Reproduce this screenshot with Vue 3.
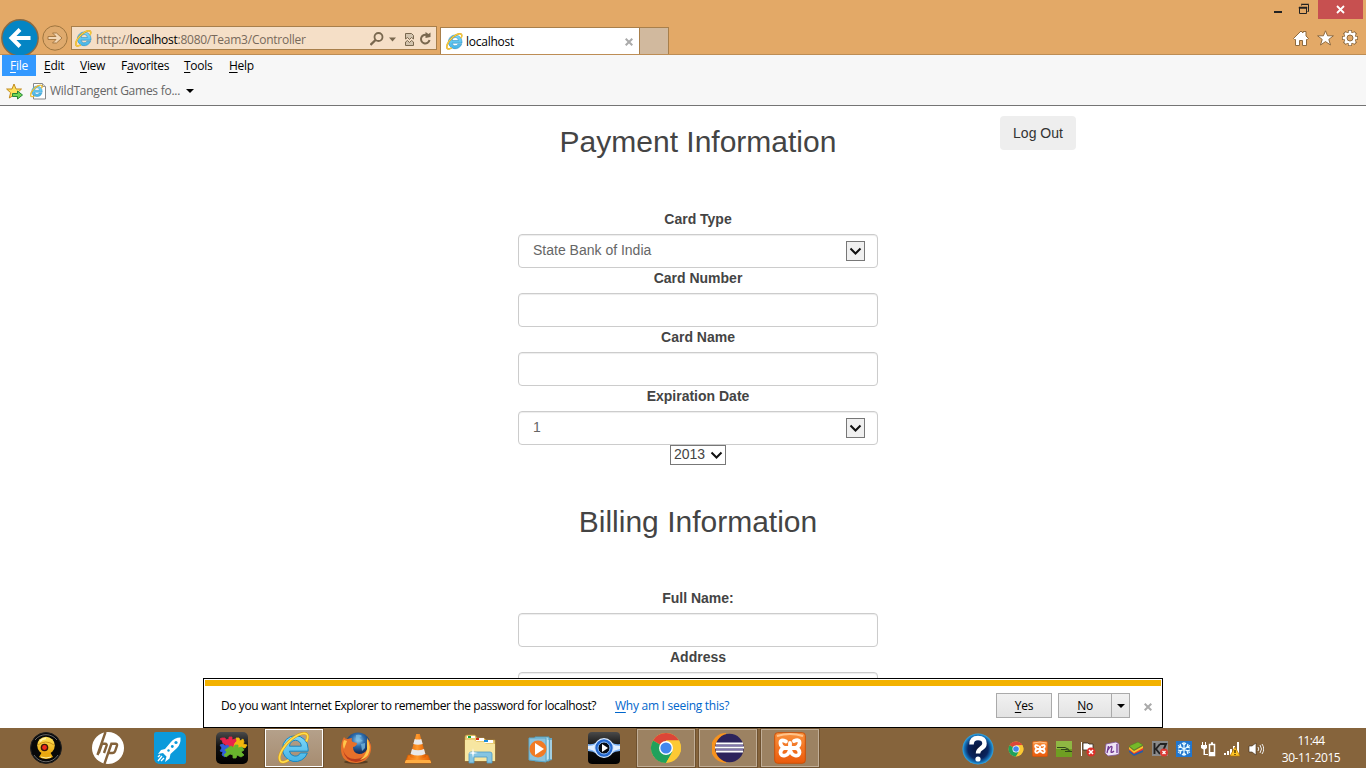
<script setup>
const menus = [
  { key: 'F', rest: 'ile', pre: '', w: 34, active: true },
  { key: 'E', rest: 'dit', pre: '', w: 36 },
  { key: 'V', rest: 'iew', pre: '', w: 41 },
  { key: 'a', rest: 'vorites', pre: 'F', w: 63 },
  { key: 'T', rest: 'ools', pre: '', w: 45 },
  { key: 'H', rest: 'elp', pre: '', w: 42 }
]
const tasks = [
  { id: 'cam' }, { id: 'hp' }, { id: 'rocket' }, { id: 'puzzle' },
  { id: 'ielogo', state: 'active' }, { id: 'firefox' }, { id: 'vlc' }, { id: 'folder' },
  { id: 'media' }, { id: 'eye' }, { id: 'chrome', state: 'open' },
  { id: 'eclipse', state: 'open' }, { id: 'xampp', state: 'open' }
]
const tray = ['chrome', 'xampp', 'nvidia', 'flag', 'onenote', 'stack', 'kasper', 'snow', 'power', 'signal', 'sound']
</script>

<template>
  <div class="screen">
    <svg class="defs" width="0" height="0" aria-hidden="true">
      <defs>
        <linearGradient id="gBlue" x1="0" y1="0" x2="0" y2="1"><stop offset="0" stop-color="#7fd8fa" /><stop offset="1" stop-color="#45b4e6" /></linearGradient>
        <linearGradient id="gBlack" x1="0" y1="0" x2="0" y2="1"><stop offset="0" stop-color="#4a4a4a" /><stop offset=".45" stop-color="#111" /><stop offset="1" stop-color="#000" /></linearGradient>
        <linearGradient id="gOrange" x1="0" y1="0" x2="0" y2="1"><stop offset="0" stop-color="#f9903c" /><stop offset="1" stop-color="#ea5a0b" /></linearGradient>
        <linearGradient id="gVlc" x1="0" y1="0" x2="1" y2="0"><stop offset="0" stop-color="#e86a08" /><stop offset=".45" stop-color="#ff9a2c" /><stop offset="1" stop-color="#e25c00" /></linearGradient>
        <radialGradient id="gHelp"><stop offset="0" stop-color="#071236" /><stop offset=".65" stop-color="#0a2560" /><stop offset=".88" stop-color="#1673b8" /><stop offset="1" stop-color="#35a9e4" /></radialGradient>
        <radialGradient id="gGlobe" cx=".5" cy=".3"><stop offset="0" stop-color="#9bd2ef" /><stop offset=".5" stop-color="#2c6cab" /><stop offset="1" stop-color="#16315f" /></radialGradient>
        <linearGradient id="gYellow" x1="0" y1="0" x2="0" y2="1"><stop offset="0" stop-color="#ffe45c" /><stop offset="1" stop-color="#e9a308" /></linearGradient>
      </defs>
      <symbol id="ielogo" viewBox="0 0 32 32">
        <path d="M4.500 16.500a12.800 12.800 0 0 1 25.600 0v2.700H11.400a5.900 5.900 0 0 0 11 1.800h7A12.800 12.800 0 0 1 4.500 16.500zm7-2.300h11.800a5.900 5.900 0 0 0-11.800 0z" fill="url(#gBlue)" stroke="#1b86bf" stroke-width="1" fill-rule="evenodd" />
        <path d="M28.300 9.500C32 2 28-.5 20.500 2.800 9.500 8-.8 22 2 28.500c1.200 2.700 5 1.800 8.600-.4" fill="none" stroke="#d99a10" stroke-width="2.800" />
        <path d="M28.300 9.500C32 2 28-.5 20.500 2.800 9.500 8-.8 22 2 28.500c1.200 2.700 5 1.800 8.600-.4" fill="none" stroke="#ffdc4d" stroke-width="1.800" />
      </symbol>
      <symbol id="cam" viewBox="0 0 32 32">
        <circle cx="16" cy="16" r="15.500" fill="#080808" stroke="#222" />
        <path d="M5 8a14 14 0 0 1 22 0M4 23a14 14 0 0 0 24 0" fill="none" stroke="#686868" stroke-width="1" />
        <path d="M12 20h8l3 5q-7 4-14 0z" fill="#e8a90f" /><path d="M11 25q5 2 10 0" stroke="#fff1a0" fill="none" />
        <circle cx="16" cy="13.500" r="8.800" fill="url(#gYellow)" /><path d="M8 13q7.500-6 16 0" fill="none" stroke="#c08413" stroke-width=".8" />
        <circle cx="14.500" cy="15.500" r="3.800" fill="#3a1708" /><circle cx="14.500" cy="15.500" r="2.400" fill="#f02a1a" />
        <path d="M10 9.500q2-3 6-3" stroke="#fff5ae" stroke-width="1.500" fill="none" />
      </symbol>
      <symbol id="hp" viewBox="0 0 32 32">
        <circle cx="16" cy="16" r="16" fill="#fff" />
        <path d="M13.500 0 5.500 23M6.800 21 10 11.800h3.200q2 0 1.300 2L12 21M12.400 32 19.400 11.800h4q2.200 0 1.500 2l-1.700 5q-.8 2.200-2.800 2.200h-4" fill="none" stroke="#84623a" stroke-width="2.400" />
      </symbol>
      <symbol id="rocket" viewBox="0 0 32 32">
        <path d="M2 0h25q5 1 5 6v24q0 2-2 2H5q-5-1-5-6V2Q0 0 2 0" fill="#0b9adb" />
        <path d="M26.500 5.500q-6 0-10 5L11 17l-4 1-3 4 5-1 3.500 3.500L11 30l4.500-3.500 1-4.500 6.500-6q4-4 3.500-10.500" fill="#fff" />
        <g fill="#0b9adb"><circle cx="22" cy="10.500" r="1.600" /><circle cx="18.300" cy="14.500" r="1.400" /><circle cx="14.500" cy="18.500" r="1.200" /></g>
        <path d="m6 23-2 2M8 24l-4 5M10 26l-3 3" stroke="#fff" stroke-width="1.400" />
      </symbol>
      <symbol id="puzzle" viewBox="0 0 32 32">
        <rect width="32" height="32" rx="5" fill="url(#gBlack)" />
        <g stroke-width=".8" stroke-linejoin="round">
          <path d="M6 6h3l1 2 3-1V5h3v3l3-1 3 1-2 3 1 4-4-1-1 3-4-1-3 1 1-4-3-2-1-3-2-1z" fill="#e9244c" stroke="#e9244c" />
          <path d="m19 11 2-2-1-3h3l1 3 3-2 1 3-1 2 4 1-2 3-3-1-1 3-4-2-4 1z" fill="#f2b70c" stroke="#f2b70c" />
          <path d="m4 13 3-1 2 2 3-1 1 3-2 2 2 3-3 1-1 3-3-2 1-3-3-1 2-3z" fill="#315ed9" stroke="#315ed9" />
          <path d="m12 16 3-2 3 2 1-3h3v3l4-1 2 3-3 2 3 3-3 2-4-2-1 3h-3v-3l-3-1-4 3-2-2 3-3-2-2z" fill="#68b52d" stroke="#68b52d" />
        </g>
      </symbol>
      <symbol id="firefox" viewBox="0 0 32 32">
        <ellipse cx="16" cy="30" rx="12" ry="1.800" fill="#593e22" />
        <circle cx="18" cy="13" r="12.500" fill="url(#gGlobe)" />
        <path d="M16 3q4-1 6 1l-3 2 4 3-4 1-3-3M21 12l4-1v5l-3 3z" fill="#78bce2" opacity=".75" />
        <path d="M4 5q1 2 3 2l5-1q-1 3 1 4l4 1q0 3-4 4 0 6 6 7 6 0 9-6 1-7-1-10 5 5 4 12-2 12-14 13Q1 31 1 17 1 10 4 5" fill="#e7702a" />
        <path d="M3 18q3 9 12 9 9 0 14-9-3 12-13 12Q5 29 3 18" fill="#b83c1c" />
        <path d="M27 6q5 9 1 17-3 4-8 5 6-5 7-11zM4 8l3 1-3 8q-2-5 0-9" fill="#ffc64b" />
      </symbol>
      <symbol id="vlc" viewBox="0 0 32 32">
        <path d="m6 23-3 8h26l-3-8z" fill="url(#gVlc)" stroke="#cf5d05" stroke-width=".7" />
        <path d="M14.200 2h3.600L24 25q-8 4-16 0z" fill="url(#gVlc)" />
        <path d="m12.700 7-1.400 5q4.700 1.600 9.400 0l-1.400-5q-3.300 1.200-6.600 0M10 17l-1.400 5q7.400 3 14.800 0L22 17q-6 2.400-12 0" fill="#e9e9e9" /><path d="m3 30 1-2h24l1 2v1H3z" fill="#ffad42" />
      </symbol>
      <symbol id="folder" viewBox="0 0 32 32">
        <path d="M1 5q0-2 2-2h8l2 3h7l2 2h9v21H1z" fill="#e9cc74" stroke="#b9943d" stroke-width=".6" />
        <path d="M3 4h8v2H3zm9 2h8v3h-8zm8 2h9v3h-9z" fill="#fff" /><path d="M4 4h3v2H4z" fill="#14a53a" /><path d="M12 6h3v2h-3z" fill="#d5311e" /><path d="M20 8h4v2h-4z" fill="#1b8edb" />
        <path d="M1 8h9l3 2h7l2 2h9v17H1z" fill="#f7e6a1" />
        <path d="M5 31v-9q0-2 2-2h19q2 0 2 2v9h-5v-6H10v6z" fill="#85c5e2" stroke="#4d99c5" stroke-width=".8" /><path d="m9 16 .8 4.200 4.200.8-4.200.8L9 26l-.8-4.200L4 21l4.200-.8z" fill="#fff" />
      </symbol>
      <symbol id="media" viewBox="0 0 32 32">
        <path d="M12 6h14v22l-4 1H12z" fill="#65a9c9" /><path d="M9 5h14v24H9z" fill="#a9d8e8" stroke="#4f9dbf" /><path d="M3 6h17v24L3 28z" fill="#8dc3dc" stroke="#5ba7c8" /><path d="M22 8v19M25 8v19" stroke="#e0f3fa" />
        <circle cx="12" cy="17" r="8.500" fill="#f17b25" /><path d="m9 11 9 6-9 6z" fill="#fff" />
      </symbol>
      <symbol id="eye" viewBox="0 0 32 32">
        <rect width="32" height="32" rx="4" fill="url(#gBlack)" /><path d="M0 12q5 1 9-2 7-5 14 0 4 3 9 2v7q-5 0-9 3-7 5-14 0-4-3-9-3z" fill="#7fb4f5" />
        <path d="M0 14q5 0 8-2v8q-3-2-8-3zM32 14q-5 0-8-2v8q3-2 8-3z" fill="#e2efff" />
        <circle cx="16" cy="16" r="9.300" fill="#2468cf" stroke="#d9eaff" stroke-width="1.200" /><circle cx="16" cy="16" r="6" fill="#060b14" stroke="#8dbdf8" /><path d="m14 12 6 4-6 4z" fill="#fff" />
      </symbol>
      <symbol id="chrome" viewBox="0 0 32 32">
        <circle cx="16" cy="16" r="15" fill="#fcc934" /><path d="M16 16 3 8.500A15 15 0 0 1 29 8.500H16z" fill="#dc4638" /><path d="M16 16 3 8.500a15 15 0 0 0 13 22.500l6.500-11.200z" fill="#20a15c" /><path d="M16 8.500H29Q32 14 30.500 20L16 31l6.500-11.200z" fill="#fcc934" />
        <circle cx="16" cy="16" r="7" fill="#fff" /><circle cx="16" cy="16" r="5.600" fill="#4387ed" />
      </symbol>
      <symbol id="eclipse" viewBox="0 0 32 32">
        <path d="M14 1a15 15 0 1 0 0 30" fill="#f7931e" /><circle cx="17.500" cy="16" r="14.300" fill="#2d245c" />
        <path d="M4 11.500h27M3 15.500h29M4 19.500h27" stroke="#fff" stroke-width="2" /><path d="M4 13.500h27M4 17.500h27" stroke="#8375ae" stroke-width="1" />
      </symbol>
      <symbol id="xampp" viewBox="0 0 32 32">
        <rect x=".7" y=".7" width="30.600" height="30.600" rx="3" fill="url(#gOrange)" stroke="#c95009" /><path d="M3 4q13-4 26 0" stroke="#ffc48c" stroke-width="2" fill="none" />
        <path d="M12 9.500Q6 6.500 6.500 11.500q.3 3 4 4.500h11q3.700-1.500 4-4.500Q26 6.500 20 9M16 11v6M10.500 16Q6.500 17 6.500 20.500 7 24.500 11 23.500q4-1 5-6.500 1 5.500 5 6.500 4 1 4.500-3 0-3.500-4-4.500" fill="none" stroke="#fff" stroke-width="3.800" stroke-linejoin="round" stroke-linecap="round" />
      </symbol>
      <symbol id="nvidia" viewBox="0 0 16 16"><path d="M0 0h16v16H0z" fill="#6f9f22" /><path d="M0 0h16v8H0z" fill="#8fb843" /><path d="M1 6.500h8l4 2M5 8.500h6l4 2M9 10.500h7" stroke="#31471a" fill="none" /></symbol>
      <symbol id="flag" viewBox="0 0 16 16"><path d="M1 1h1v14H1z" fill="#fff" /><path d="M3 2h5l1 1h4v8H9L7 9H3z" fill="#fff" stroke="#33291f" stroke-width=".8" /><circle cx="11" cy="11" r="4.500" fill="#db3028" /><path d="m9 9 4 4m0-4-4 4" stroke="#fff" stroke-width="1.500" /></symbol>
      <symbol id="onenote" viewBox="0 0 16 16"><path d="M2 3 12 1l3 2v10l-3 1-8 1-3-3z" fill="#eee4f5" stroke="#815799" stroke-width=".8" /><path d="m4.500 5-1.500 7M4 9q3-5 4-3l-1 5q1 1 3-1M13 3v9" fill="none" stroke="#713892" stroke-width="1.300" /></symbol>
      <symbol id="stack" viewBox="0 0 16 16"><path d="m1 9 5 4 9-5v3l-9 4-5-4z" fill="#245da9" /><path d="m1 7 5 4 9-5v3l-9 4-5-4z" fill="#ed392f" /><path d="m1 6 5 4 9-5v2l-9 5-5-4z" fill="#f5c829" /><path d="m1 5 9-4 5 3-9 5z" fill="#76b82a" stroke="#47831e" stroke-width=".5" /></symbol>
      <symbol id="kasper" viewBox="0 0 16 16"><path d="M0 0h16v15H0z" fill="#8a8a8a" /><path d="M2.500 2v11M8 3 4 8l4 5M8 3h6l-4 9" fill="none" stroke="#222" stroke-width="1.900" /><circle cx="12" cy="11.500" r="4" fill="#db3a32" /><path d="m10.500 10 3 3m0-3-3 3" stroke="#fff" stroke-width="1.300" /></symbol>
      <symbol id="snow" viewBox="0 0 16 16"><path d="M0 0h16v16H0z" fill="#2176ce" /><path d="M8 1v14M2 4.500l12 7M14 4.500l-12 7M6 2l2 2 2-2M6 14l2-2 2 2M2 7l3-1-1-3M14 7l-3-1 1-3M2 9l3 1-1 3M14 9l-3 1 1 3" stroke="#e8fbff" stroke-width="1.200" fill="none" /></symbol>
      <symbol id="power" viewBox="0 0 16 16"><path d="M2.500 1v3M5.500 1v3" stroke="#fff" /><path d="M1 4h6v3L5 8.500V13h3v1H3.500V8.500L1 7z" fill="#fff" /><path d="M9.500 3.500h5v11h-5zM11 2h2" fill="none" stroke="#fff" stroke-width="1.500" /><path d="M10 11h4v3h-4z" fill="#fff" /></symbol>
      <symbol id="signal" viewBox="0 0 16 16"><path d="M0 12h2v2H0zm3-2h2v4H3zm3-2h2v6H6zm3-3h2v9H9zm4-4h2v13h-2z" fill="#fff" /><path d="m11 6 5 9H6z" fill="#ffc524" stroke="#af6e00" stroke-width=".7" /><path d="M11 9v3M11 13v1" stroke="#473000" stroke-width="1.400" /></symbol>
      <symbol id="sound" viewBox="0 0 16 16"><path d="M1 5h3l4-3v12l-4-3H1z" fill="#fff" stroke="#3b2a18" stroke-width=".6" /><path d="M10 6q1.500 2 0 4M12 4q3 4 0 8M14 3q3.500 5 0 10" fill="none" stroke="#eee" /></symbol>
    </svg>

    <header class="chrome-bar">
      <div class="nav">
        <svg class="back" width="38" height="38" viewBox="0 0 38 38"><circle cx="19" cy="19" r="18.200" fill="#0485c4" stroke="#8b6a43" stroke-width="1.400" /><path d="M29.500 19H11.500M19 10.500 10.500 19l8.500 8.500" fill="none" stroke="#fff" stroke-width="4" /></svg>
        <svg class="forward" width="26" height="26" viewBox="0 0 26 26"><circle cx="13" cy="13" r="12.200" fill="#dfaa6d" stroke="#9e753f" /><path d="M6 11.500h8L10.500 8h4l5.500 5-5.500 5h-4l3.500-3.500H6z" fill="#f3d7b5" stroke="#a77a45" stroke-width="1" /></svg>
        <div class="address">
          <svg width="17" height="17"><use href="#ielogo" /></svg>
          <span class="url">http://<b>localhost</b>:8080/Team3/Controller</span>
          <svg class="tools" width="64" height="16" viewBox="0 0 64 16" fill="none" stroke="#79684f">
            <circle cx="8.500" cy="6" r="4" stroke-width="1.800" /><path d="m5.500 9-5 5" stroke-width="2.300" /><path d="M19 6.500h7l-3.500 4z" fill="#79684f" stroke="none" />
            <path d="M35.500 8V2.500h6l2 2V8l-2-1.500-2 2-2-2zM35.500 11l2-1.500 2 2 2-2 2 1.500v3.500h-8z" fill="#d2c3ad" />
            <path d="M57.500 4.500a4.300 4.300 0 1 0 2 4.500" stroke-width="2" /><path d="M55.500 1v6l5-1V1.500L58.500 3z" fill="#79684f" stroke="none" />
          </svg>
        </div>
      </div>
      <div class="tab"><svg width="17" height="17"><use href="#ielogo" /></svg><span>localhost</span><svg class="tab-x" width="8" height="8" viewBox="0 0 8 8"><path d="m.7.7 6.600 6.600M7.300.7.7 7.300" stroke="#aaa" stroke-width="2" /></svg></div>
      <div class="new-tab"></div>
      <div class="window-side">
        <div class="window-controls">
          <svg width="42" height="19" viewBox="0 0 42 19"><path d="M0 11h8v2H0z" fill="#222" /><path d="M25.500 7.500h7v6h-7zM27.500 5.500v-1h7v7h-1" fill="none" stroke="#222" /><path d="M25 7h8v1.500h-8zM27 4h8" stroke="#222" fill="#222" stroke-width=".5" /></svg>
          <div class="close"><svg width="9" height="9" viewBox="0 0 9 9"><path d="m1 1 7 7M8 1 1 8" stroke="#fff" stroke-width="1.800" /></svg></div>
        </div>
        <div class="browser-icons">
          <svg width="16" height="16" viewBox="0 0 16 16"><path d="m8 1 2 2V1.500h3V6l2.500 2.500-1.200 1H13.500v6H9.500v-5h-3v5h-4v-6H1.500l-1-1z" fill="#fff" stroke="#8e6a3f" /></svg>
          <svg width="17" height="16" viewBox="0 0 17 16"><path d="m8.500.8 2.100 5h5.800l-4.600 3.600 1.700 5.600-5-3.400-5 3.400 1.700-5.600L.6 5.800h5.800z" fill="#fff" stroke="#8e6a3f" /></svg>
          <svg width="16" height="16" viewBox="0 0 16 16"><path d="M8 0v16M0 8h16M2.300 2.300l11.400 11.400M13.700 2.300 2.300 13.700" stroke="#8e6a3f" stroke-width="4" /><circle cx="8" cy="8" r="6" fill="#fff" stroke="#8e6a3f" /><path d="M8 .8v14.400M.8 8h14.400M3 3l10 10M13 3 3 13" stroke="#fff" stroke-width="2.500" /><circle cx="8" cy="8" r="3" fill="#e3a967" stroke="#8e6a3f" /></svg>
        </div>
      </div>
    </header>

    <div class="bars">
      <nav class="menu"><div v-for="m in menus" :key="m.key" :class="{ active: m.active }" :style="{ width: m.w + 'px' }">{{ m.pre }}<u>{{ m.key }}</u>{{ m.rest }}</div></nav>
      <div class="favorites">
        <svg width="17" height="17" viewBox="0 0 17 17"><path d="m8 1 2 5h5.500l-4 3.700 1.300 5.300L8 12l-4.700 3 1.300-5.300-4-3.700H6z" fill="#ffe25c" stroke="#c18a1e" /><path d="M6.500 10.500h5V8l5 4-5 4v-2.500h-5z" fill="#70d553" stroke="#238535" /></svg>
        <svg class="page-icon" width="17" height="17" viewBox="0 0 17 17"><path d="M3.500.500h9l3 3v12.500h-12z" fill="#fff" stroke="#888" /><path d="M12.500.500v3h3" fill="#ddd" stroke="#999" /><use href="#ielogo" x="0" y="1.500" width="13" height="13" /></svg>
        <span>WildTangent Games fo...</span><i class="caret"></i>
      </div>
    </div>

    <main class="page">
      <button class="logout">Log Out</button>
      <form class="form">
        <h2>Payment Information</h2>
        <label>Card Type</label>
        <div class="field"><span>State Bank of India</span><i class="arrow"><svg width="13" height="9" viewBox="0 0 13 9"><path d="m1.500 1.500 5 5 5-5" /></svg></i></div>
        <label>Card Number</label><div class="field"></div>
        <label>Card Name</label><div class="field"></div>
        <label>Expiration Date</label>
        <div class="field"><span>1</span><i class="arrow"><svg width="13" height="9" viewBox="0 0 13 9"><path d="m1.500 1.500 5 5 5-5" /></svg></i></div>
        <div class="year"><span>2013</span><svg width="13" height="9" viewBox="0 0 13 9"><path d="m1.500 1.500 5 5 5-5" /></svg></div>
        <h2 class="billing">Billing Information</h2>
        <label>Full Name:</label><div class="field"></div>
        <label>Address</label><div class="field"></div>
      </form>
    </main>

    <aside class="notice">
      <div class="stripe"></div>
      <div class="notice-row">
        <span class="question">Do you want Internet Explorer to remember the password for localhost?</span>
        <a class="why"><u>W</u>hy am I seeing this?</a>
        <div class="btn yes"><span><u>Y</u>es</span></div>
        <div class="btn no"><span><u>N</u>o</span><em><i class="caret"></i></em></div>
        <svg class="dismiss" width="8" height="8" viewBox="0 0 8 8"><path d="m.7.7 6.600 6.600M7.300.7.7 7.300" stroke="#aaa" stroke-width="2" /></svg>
      </div>
    </aside>

    <footer class="taskbar">
      <div class="tasks"><div v-for="t in tasks" :key="t.id" class="task" :class="t.state"><svg width="32" height="32"><use :href="'#' + t.id" /></svg></div></div>
      <svg class="help" width="32" height="32" viewBox="0 0 32 32"><circle cx="16" cy="16" r="15.500" fill="url(#gHelp)" /><path d="M9.500 11.500q0-6.500 6.500-6.500t6.500 5.500q0 3-3.500 5-3 2-3 5" fill="none" stroke="#fff" stroke-width="4.500" /><circle cx="16" cy="26" r="2.600" fill="#fff" /></svg>
      <div class="tray"><svg v-for="t in tray" :key="t" width="16" height="16"><use :href="'#' + t" /></svg></div>
      <div class="clock"><div class="time">11:44</div><div class="date">30-11-2015</div></div>
    </footer>
  </div>
</template>

<style>
body { margin: 0; overflow: hidden; }
</style>
<style scoped>
* { box-sizing: border-box; }
.screen { position: relative; width: 1366px; height: 768px; display: flex; flex-direction: column; overflow: hidden; background: #fff; font: 12px/16px "Open Sans", "Noto Sans", sans-serif; color: #000; }
.defs { position: absolute; }
svg { display: block; flex: none; }
u { text-underline-offset: 2px; text-decoration-thickness: 1px; }
.chrome-bar { height: 55px; flex: none; display: flex; background: #e3a967; border-bottom: 1px solid #bd8d55; align-items: flex-end; }
.nav { width: 440px; height: 35px; display: flex; align-items: flex-start; padding-left: 1px; }
.forward { margin: 6px 0 0 3px; }
.address { width: 366px; height: 24px; margin: 7px 0 0 3px; border: 1px solid #a87f4b; background: #f5dfc7; display: flex; align-items: center; padding-left: 3px; }
.url { margin-left: 4px; padding-top: 3px; color: #77695b; width: 215px; letter-spacing: -.25px; white-space: nowrap; }
.url b { font-weight: 400; color: #000; }
.tools { margin: 2px 0 0 59px; }
.tab { width: 200px; height: 27px; border: 1px solid #a87f4b; border-bottom: 0; background: #fff; display: flex; align-items: center; padding: 1px 0 0 5px; letter-spacing: -.25px; }
.tab span { margin-left: 3px; padding-top: 1px; flex: 1; }
.tab-x { margin-right: 6px; }
.new-tab { width: 29px; height: 27px; background: #d1b99e; border: 1px solid #a87f4b; border-width: 1px 1px 0 0; }
.window-side { margin-left: auto; height: 54px; }
.window-controls { display: flex; height: 19px; }
.close { width: 45px; height: 19px; margin: 0 3px 0 2px; background: #c75050; display: flex; align-items: center; justify-content: center; }
.browser-icons { display: flex; gap: 8px; padding: 11px 0 0 19px; }
.bars { height: 51px; flex: none; background: #f7f7f7; border-bottom: 1px solid #747474; }
.menu { display: flex; padding-left: 2px; height: 21px; }
.menu div { padding: 3px 0 0 8px; letter-spacing: -.28px; white-space: nowrap; }
.menu .active { background: #3399ff; color: #fff; }
.favorites { display: flex; align-items: center; height: 30px; padding-left: 6px; color: #666; letter-spacing: -.25px; }
.page-icon { margin-left: 7px; }
.favorites span { margin-left: 3px; width: 130px; white-space: nowrap; }
.caret { width: 0; height: 0; border: 4px solid transparent; border-top-color: #000; border-bottom: 0; }
.favorites .caret { margin-left: 6px; }
.page { position: relative; height: 622px; flex: none; overflow: hidden; padding-left: 518px; font: 14px/20px "Liberation Sans", Arial, sans-serif; color: #444; }
.logout { position: absolute; left: 1000px; top: 10px; width: 76px; height: 34px; border: 0; padding: 0; border-radius: 4px; background: #eee; color: #333; font: inherit; }
.form { width: 360px; padding-top: 19px; text-align: center; }
h2 { font-size: 30px; line-height: 33px; font-weight: 400; margin: 0 0 51px; white-space: nowrap; color: #444; }
h2.billing { margin: 40px 0 50px; }
label { display: block; font-weight: 700; margin-bottom: 5px; }
.field { height: 34px; border: 1px solid #ccc; border-radius: 4px; box-shadow: inset 0 1px 1px rgba(0,0,0,.075); display: flex; align-items: center; padding: 0 12px 2px 14px; color: #666; }
.arrow { width: 19px; height: 20px; margin: 1px 0 0 auto; border: 1px solid #777; background: #f0f0f0; display: flex; align-items: center; justify-content: center; }
.arrow svg { margin-top: 1px; }
.arrow path, .year path { fill: none; stroke: #111; stroke-width: 2; }
.year { width: 56px; height: 20px; margin: 0 auto; border: 1px solid #777; display: flex; align-items: center; padding: 0 2px 0 3px; justify-content: space-between; }
.year span { padding-bottom: 2px; }
.notice { position: absolute; left: 203px; top: 678px; width: 960px; height: 50px; border: 1px solid #000; background: #fff; padding: 1px; }
.stripe { height: 6px; background: #f3b200; }
.notice-row { display: flex; height: 39px; align-items: center; padding-left: 16px; letter-spacing: -.27px; white-space: nowrap; }
.question { width: 394px; padding-top: 1px; letter-spacing: -.4px; }
.why { width: 381px; padding-top: 1px; color: #0066cc; }
.btn { height: 25px; border: 1px solid #aaa; background: linear-gradient(#f1f1f1, #e3e3e3); display: flex; }
.btn span { flex: 1; text-align: center; line-height: 24px; }
.yes { width: 56px; }
.no { width: 72px; margin-left: 6px; }
.btn em { width: 18px; border-left: 1px solid #aaa; display: flex; align-items: center; justify-content: center; }
.dismiss { margin: 3px 0 0 14px; }
.taskbar { height: 40px; flex: none; background: #86643c; display: flex; padding-left: 16px; }
.tasks { display: flex; gap: 2px; }
.task { width: 60px; height: 40px; display: flex; align-items: center; justify-content: center; }
.task.open { background: #9c8262; border: 1px solid #6e512f; box-shadow: inset 0 0 0 1px #c1ae97; }
.task.active { background: linear-gradient(#b5a18b, #a68c70); border: 1px solid #6e512f; box-shadow: inset 0 0 0 1px #fff; }
.help { margin: 5px 0 0 142px; }
.tray { display: flex; gap: 8px; margin: 13px 0 0 14px; }
.clock { width: 60px; margin-left: 17px; color: #fff; text-align: center; padding-top: 4px; line-height: 17px; }
.time { letter-spacing: -.7px; }
.date { letter-spacing: -.4px; }
</style>
